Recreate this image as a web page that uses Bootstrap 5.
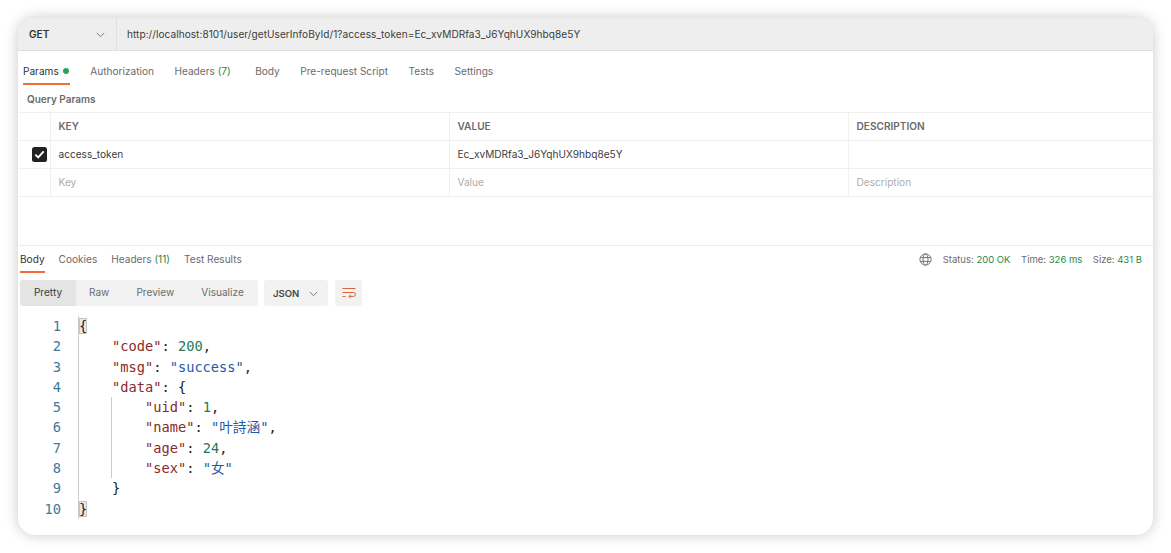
<!DOCTYPE html>
<html lang="zh">
<head>
<meta charset="utf-8">
<title>Postman</title>
<link href="https://cdn.jsdelivr.net/npm/bootstrap@5.3.0/dist/css/bootstrap.min.css" rel="stylesheet">
<style>
html,body{height:100%;background:#fff;overflow:hidden}
body{font-family:Inter,"Noto Sans CJK SC",sans-serif;font-size:10.1px;color:#6b6b6b;padding:18px;line-height:1.2}
.win{height:517px;width:1135px;background:#fff;border-radius:17px;box-shadow:0 0 14px rgba(0,0,0,.22);overflow:hidden}
.urlbar{height:33px;background:#eee;border-bottom:1px solid #e0e0e0}
.method{width:99px;border-right:1px solid #e0e0e0;padding:1px 11px 0 11px;font-weight:600;color:#333;font-size:10.1px}
.urltext{padding-left:10px;color:#3c3c3c;font-size:10.05px;letter-spacing:.06px}
.reqtabs{height:34px;padding-left:5px;gap:20.5px}
.reqtabs .tabi{padding-top:6px}
.tabi{height:100%;display:flex;align-items:center;color:#6b6b6b;font-size:10.1px;white-space:nowrap}
.tabi.onn{color:#333;box-shadow:inset 0 -2px 0 #f26b3a}
.dotg{width:6px;height:6px;border-radius:50%;background:#26a65b;margin-left:4px;margin-right:1px}
.greenn{color:#26894f}
.qp{height:27px;padding:0 0 0 9px;font-weight:600;font-size:10px;color:#6b6b6b}
.qtable{table-layout:fixed;width:1135px;border-collapse:collapse;margin:0}
.qtable td,.qtable th{height:28px;border:1px solid #f0f0f0;padding:0 8px;font-size:10.1px;vertical-align:middle;color:#3c3c3c;font-weight:400;border-left-width:0}
.qtable th{font-weight:600;color:#6b6b6b}
.qtable tr>*:first-child{padding:0}
.qtable tr>*:last-child{border-right:0}
.ph{color:#adadad!important}
.chk{width:15px;height:15px;background:#222;border-radius:2.5px;margin-left:14px}
.gapz{height:49px;border-bottom:1px solid #ededed}
.resp{height:27px;padding:0 1px 0 2px}
.resp .lefttabs{gap:14px;height:100%}
.resp .tabi{padding-top:0}
.stat{font-size:9.5px;color:#6b6b6b;padding-right:10px}
.stat .itm{margin-left:10.5px}
.tool{padding:7px 0 0 2px;gap:6px}
.seg{height:26px;background:#f2f2f2;border-radius:3px;width:238px}
.seg span{height:100%;display:flex;align-items:center;color:#6b6b6b;font-size:10.1px;padding-bottom:1px}
.seg .sel{background:#e4e4e4;color:#3c3c3c;width:56px;justify-content:center;border-radius:3px 0 0 3px}
.seg .rw{margin-left:13px}
.seg .pv{margin-left:27px}
.jsonb{width:64px;height:26px;background:#f2f2f2;border-radius:3px;font-size:9.5px;font-weight:600;color:#444;padding:1px 10px 0 9px}
.wrapb{width:27px;height:26px;background:#f2f2f2;border-radius:3px;margin-left:1px}
.code{margin-top:10px;font-family:"DejaVu Sans Mono","Noto Sans CJK SC",monospace;font-size:13.7px;line-height:20.3px}
.cl{height:20.3px;white-space:pre;display:flex}
.ln{width:43px;text-align:right;color:#3a7a9a;flex:none}
.tx{margin-left:17px;color:#222;border-left:1px solid #ccc;flex:1}
.k{color:#8a2a2a}.s{color:#1f5aa8}.n{color:#1f7a55}
.brk{background:#e8e8e8;outline:1px solid #c4c4c4;outline-offset:-1px}
.gd{display:inline-block;width:33px;margin-left:-1px;margin-right:1px;border-left:1px solid #ccc;height:20.3px;vertical-align:top}
</style>
</head>
<body>
<div class="win">
  <div class="urlbar d-flex align-items-center">
    <div class="method h-100 d-flex align-items-center justify-content-between"><span>GET</span>
      <svg width="9" height="6" viewBox="0 0 9 6"><path d="M.8 1l3.7 3.7L8.2 1" fill="none" stroke="#777" stroke-width="1"/></svg></div>
    <div class="urltext">http://localhost:8101/user/getUserInfoById/1?access_token=Ec_xvMDRfa3_J6YqhUX9hbq8e5Y</div>
  </div>
  <div class="reqtabs d-flex">
    <div class="tabi onn">Params<span class="dotg"></span></div>
    <div class="tabi">Authorization</div>
    <div class="tabi">Headers&nbsp;<span class="greenn">(7)</span></div>
    <div class="tabi ms-1">Body</div>
    <div class="tabi">Pre-request Script</div>
    <div class="tabi">Tests</div>
    <div class="tabi">Settings</div>
  </div>
  <div class="qp d-flex align-items-center">Query Params</div>
  <table class="qtable">
    <colgroup><col style="width:32px"><col style="width:399px"><col style="width:399px"><col></colgroup>
    <tr><th></th><th>KEY</th><th>VALUE</th><th>DESCRIPTION</th></tr>
    <tr><td><div class="chk d-flex align-items-center justify-content-center"><svg width="11" height="9" viewBox="0 0 11 9"><path d="M1.3 4.6l2.9 2.8 5.5-6" fill="none" stroke="#fff" stroke-width="1.9"/></svg></div></td><td>access_token</td><td>Ec_xvMDRfa3_J6YqhUX9hbq8e5Y</td><td></td></tr>
    <tr><td></td><td class="ph">Key</td><td class="ph">Value</td><td class="ph">Description</td></tr>
  </table>
  <div class="gapz"></div>
  <div class="resp d-flex justify-content-between align-items-center">
    <div class="lefttabs d-flex">
      <div class="tabi onn">Body</div>
      <div class="tabi">Cookies</div>
      <div class="tabi">Headers&nbsp;<span class="greenn">(11)</span></div>
      <div class="tabi">Test Results</div>
    </div>
    <div class="stat d-flex align-items-center">
      <svg width="13" height="13" viewBox="0 0 13 13" fill="none" stroke="#666" stroke-width=".9"><circle cx="6.5" cy="6.5" r="5.6"/><ellipse cx="6.5" cy="6.5" rx="2.5" ry="5.6"/><path d="M1.3 4.6h10.4M1.3 8.4h10.4"/></svg>
      <span class="itm">Status: <span class="greenn">200 OK</span></span>
      <span class="itm">Time: <span class="greenn">326 ms</span></span>
      <span class="itm">Size: <span class="greenn">431 B</span></span>
    </div>
  </div>
  <div class="tool d-flex">
    <div class="seg d-flex"><span class="sel">Pretty</span><span class="rw">Raw</span><span class="pv">Preview</span><span class="pv">Visualize</span></div>
    <div class="jsonb d-flex align-items-center justify-content-between"><span>JSON</span><svg width="9" height="6" viewBox="0 0 9 6"><path d="M.8 1l3.7 3.7L8.2 1" fill="none" stroke="#777"/></svg></div>
    <div class="wrapb d-flex align-items-center justify-content-center"><svg width="14" height="12" viewBox="0 0 14 12" fill="none" stroke="#d4683c" stroke-width="1"><path d="M.5 1.5h13M.5 5.5h11a1.9 1.9 0 0 1 0 3.9H7M.5 9.5h3"/><path d="M8.8 7.6L7 9.4l1.8 1.8"/></svg></div>
  </div>
  <div class="code">
    <div class="cl"><div class="ln">1</div><div class="tx"><span class="brk">{</span></div></div>
    <div class="cl"><div class="ln">2</div><div class="tx">    <span class="k">"code"</span>: <span class="n">200</span>,</div></div>
    <div class="cl"><div class="ln">3</div><div class="tx">    <span class="k">"msg"</span>: <span class="s">"success"</span>,</div></div>
    <div class="cl"><div class="ln">4</div><div class="tx">    <span class="k">"data"</span>: {</div></div>
    <div class="cl"><div class="ln">5</div><div class="tx">    <span class="gd"></span><span class="k">"uid"</span>: <span class="n">1</span>,</div></div>
    <div class="cl"><div class="ln">6</div><div class="tx">    <span class="gd"></span><span class="k">"name"</span>: <span class="s">"叶詩涵"</span>,</div></div>
    <div class="cl"><div class="ln">7</div><div class="tx">    <span class="gd"></span><span class="k">"age"</span>: <span class="n">24</span>,</div></div>
    <div class="cl"><div class="ln">8</div><div class="tx">    <span class="gd"></span><span class="k">"sex"</span>: <span class="s">"女"</span></div></div>
    <div class="cl"><div class="ln">9</div><div class="tx">    }</div></div>
    <div class="cl"><div class="ln">10</div><div class="tx"><span class="brk">}</span></div></div>
  </div>
</div>
<script src="https://cdn.jsdelivr.net/npm/bootstrap@5.3.0/dist/js/bootstrap.bundle.min.js"></script>
</body>
</html>
